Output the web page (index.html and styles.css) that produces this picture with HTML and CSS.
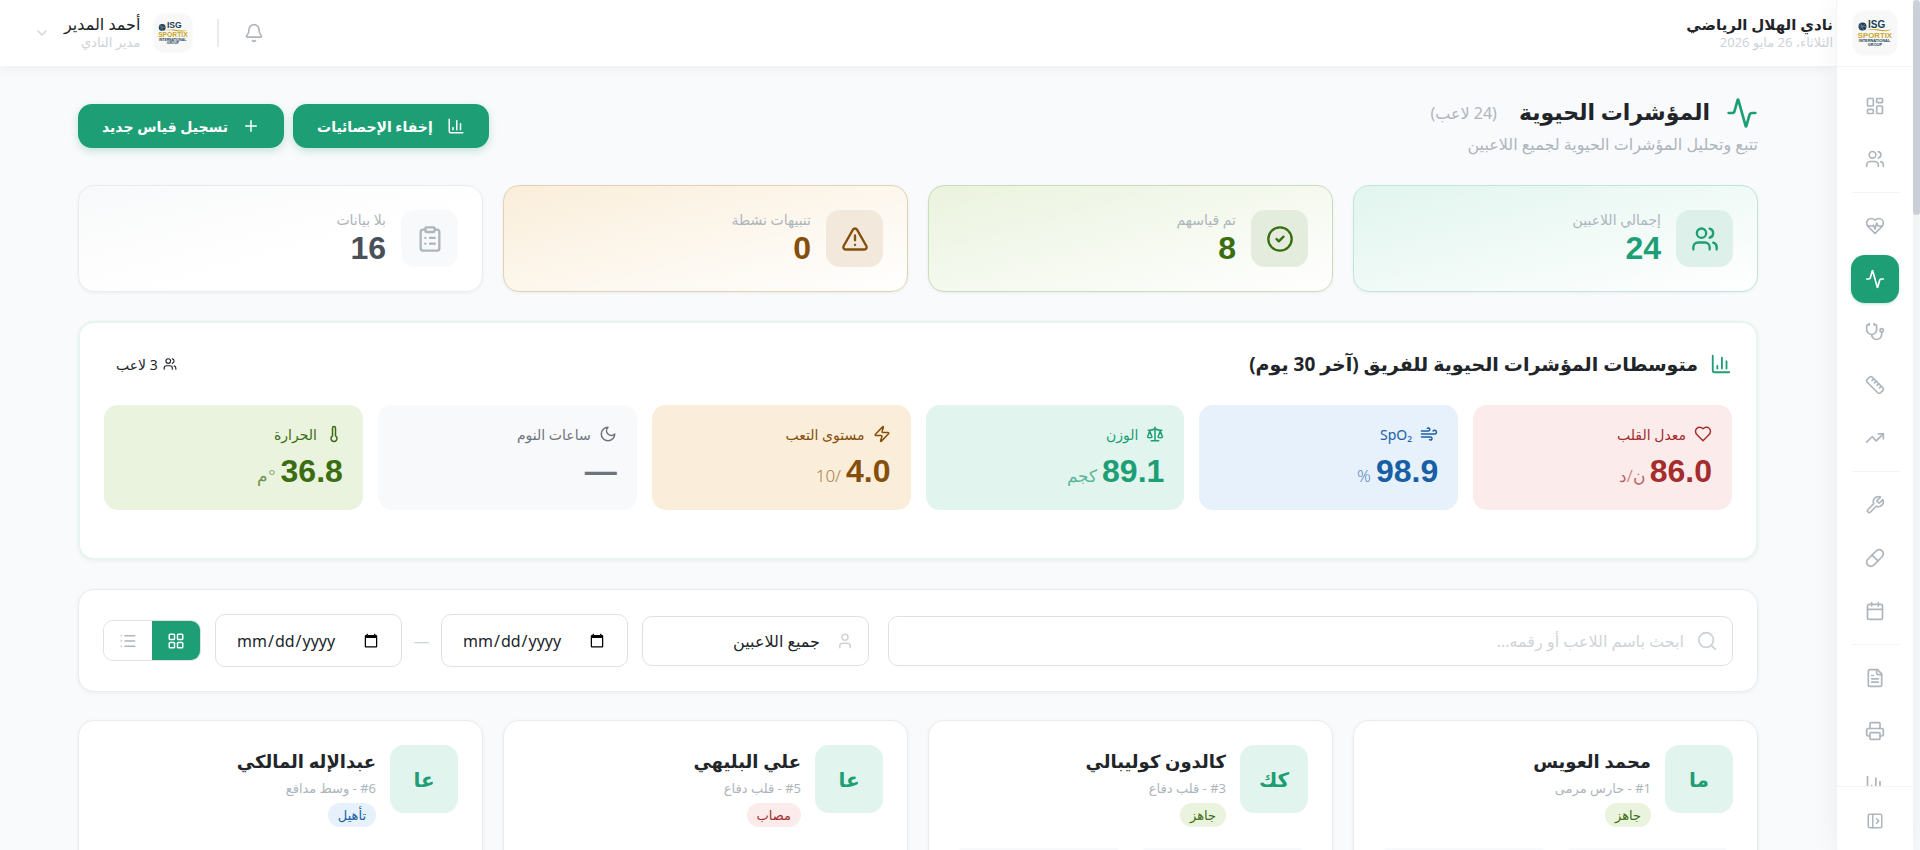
FILE: index.html
```html
<!DOCTYPE html>
<html lang="ar" dir="rtl">
<head>
    <meta charset="UTF-8">
    <title>المؤشرات الحيوية</title>
    <link rel="stylesheet" href="styles.css">
</head>
<body>
    <svg class="sprite" aria-hidden="true">
        <symbol id="i-dashboard" viewBox="0 0 24 24"><rect width="7" height="9" x="3" y="3" rx="1"/><rect width="7" height="5" x="14" y="3" rx="1"/><rect width="7" height="9" x="14" y="12" rx="1"/><rect width="7" height="5" x="3" y="16" rx="1"/></symbol>
        <symbol id="i-users" viewBox="0 0 24 24"><path d="M16 21v-2a4 4 0 0 0-4-4H6a4 4 0 0 0-4 4v2"/><circle cx="9" cy="7" r="4"/><path d="M22 21v-2a4 4 0 0 0-3-3.87M16 3.13a4 4 0 0 1 0 7.75"/></symbol>
        <symbol id="i-heart-pulse" viewBox="0 0 24 24"><path d="M19 14c1.49-1.46 3-3.21 3-5.5A5.5 5.5 0 0 0 16.5 3c-1.76 0-3 .5-4.5 2-1.5-1.5-2.74-2-4.5-2A5.5 5.5 0 0 0 2 8.5c0 2.3 1.5 4.05 3 5.5l7 7Z"/><path d="M3.22 12H9.5l.5-1 2 4.5 2-7 1.5 3.5h5.27"/></symbol>
        <symbol id="i-activity" viewBox="0 0 24 24"><path d="M22 12h-2.48a2 2 0 0 0-1.93 1.46l-2.35 8.36a.25.25 0 0 1-.48 0L9.24 2.18a.25.25 0 0 0-.48 0l-2.35 8.36A2 2 0 0 1 4.49 12H2"/></symbol>
        <symbol id="i-stethoscope" viewBox="0 0 24 24"><path d="M11 2v2M5 2v2M5 3H4a2 2 0 0 0-2 2v4a6 6 0 0 0 12 0V5a2 2 0 0 0-2-2h-1"/><path d="M8 15a6 6 0 0 0 12 0v-3"/><circle cx="20" cy="10" r="2"/></symbol>
        <symbol id="i-ruler" viewBox="0 0 24 24"><path d="M21.3 15.3a2.4 2.4 0 0 1 0 3.4l-2.6 2.6a2.4 2.4 0 0 1-3.4 0L2.7 8.7a2.41 2.41 0 0 1 0-3.4l2.6-2.6a2.41 2.41 0 0 1 3.4 0Z"/><path d="m14.5 12.5 2-2M11.5 9.5l2-2M8.5 6.5l2-2M17.5 15.5l2-2"/></symbol>
        <symbol id="i-trending" viewBox="0 0 24 24"><path d="M16 7h6v6"/><path d="m22 7-8.5 8.5-5-5L2 17"/></symbol>
        <symbol id="i-wrench" viewBox="0 0 24 24"><path d="M14.7 6.3a1 1 0 0 0 0 1.4l1.6 1.6a1 1 0 0 0 1.4 0l3.77-3.77a6 6 0 0 1-7.94 7.94l-6.91 6.91a2.12 2.12 0 0 1-3-3l6.91-6.91a6 6 0 0 1 7.94-7.94l-3.76 3.76z"/></symbol>
        <symbol id="i-pill" viewBox="0 0 24 24"><path d="m10.5 20.5 10-10a4.95 4.95 0 1 0-7-7l-10 10a4.95 4.95 0 1 0 7 7Z"/><path d="m8.5 8.5 7 7"/></symbol>
        <symbol id="i-calendar" viewBox="0 0 24 24"><path d="M8 2v4M16 2v4M3 10h18"/><rect width="18" height="18" x="3" y="4" rx="2"/></symbol>
        <symbol id="i-file" viewBox="0 0 24 24"><path d="M15 2H6a2 2 0 0 0-2 2v16a2 2 0 0 0 2 2h12a2 2 0 0 0 2-2V7Z"/><path d="M14 2v4a2 2 0 0 0 2 2h4M10 9H8M16 13H8M16 17H8"/></symbol>
        <symbol id="i-printer" viewBox="0 0 24 24"><path d="M6 18H4a2 2 0 0 1-2-2v-5a2 2 0 0 1 2-2h16a2 2 0 0 1 2 2v5a2 2 0 0 1-2 2h-2"/><path d="M6 9V3a1 1 0 0 1 1-1h10a1 1 0 0 1 1 1v6"/><rect x="6" y="14" width="12" height="8" rx="1"/></symbol>
        <symbol id="i-chart" viewBox="0 0 24 24"><path d="M3 3v16a2 2 0 0 0 2 2h16M18 17V9M13 17V5M8 17v-3"/></symbol>
        <symbol id="i-panel" viewBox="0 0 24 24"><rect width="18" height="18" x="3" y="3" rx="2"/><path d="M9 3v18M14 9l3 3-3 3"/></symbol>
        <symbol id="i-bell" viewBox="0 0 24 24"><path d="M10.268 21a2 2 0 0 0 3.464 0"/><path d="M3.262 15.326A1 1 0 0 0 4 17h16a1 1 0 0 0 .74-1.673C19.41 13.956 18 12.499 18 8A6 6 0 0 0 6 8c0 4.499-1.411 5.956-2.738 7.326"/></symbol>
        <symbol id="i-chevron" viewBox="0 0 24 24"><path d="m6 9 6 6 6-6"/></symbol>
        <symbol id="i-plus" viewBox="0 0 24 24"><path d="M5 12h14M12 5v14"/></symbol>
        <symbol id="i-check" viewBox="0 0 24 24"><circle cx="12" cy="12" r="10"/><path d="m9 12 2 2 4-4"/></symbol>
        <symbol id="i-alert" viewBox="0 0 24 24"><path d="m21.73 18-8-14a2 2 0 0 0-3.48 0l-8 14A2 2 0 0 0 4 21h16a2 2 0 0 0 1.73-3M12 9v4M12 17h.01"/></symbol>
        <symbol id="i-clipboard" viewBox="0 0 24 24"><rect width="8" height="4" x="8" y="2" rx="1"/><path d="M16 4h2a2 2 0 0 1 2 2v14a2 2 0 0 1-2 2H6a2 2 0 0 1-2-2V6a2 2 0 0 1 2-2h2M12 11h4M12 16h4M8 11h.01M8 16h.01"/></symbol>
        <symbol id="i-heart" viewBox="0 0 24 24"><path d="M19 14c1.49-1.46 3-3.21 3-5.5A5.5 5.5 0 0 0 16.5 3c-1.76 0-3 .5-4.5 2-1.5-1.5-2.74-2-4.5-2A5.5 5.5 0 0 0 2 8.5c0 2.3 1.5 4.05 3 5.5l7 7Z"/></symbol>
        <symbol id="i-wind" viewBox="0 0 24 24"><path d="M12.8 19.6A2 2 0 1 0 14 16H2M17.5 8a2.5 2.5 0 1 1 2 4H2M9.8 4.4A2 2 0 1 1 11 8H2"/></symbol>
        <symbol id="i-scale" viewBox="0 0 24 24"><path d="m16 16 3-8 3 8c-.87.65-1.92 1-3 1s-2.13-.35-3-1ZM2 16l3-8 3 8c-.87.65-1.92 1-3 1s-2.13-.35-3-1ZM7 21h10M12 3v18M3 7h2c2 0 5-1 7-2 2 1 5 2 7 2h2"/></symbol>
        <symbol id="i-zap" viewBox="0 0 24 24"><path d="M4 14a1 1 0 0 1-.78-1.63l9.9-10.2a.5.5 0 0 1 .86.46l-1.92 6.02A1 1 0 0 0 13 10h7a1 1 0 0 1 .78 1.63l-9.9 10.2a.5.5 0 0 1-.86-.46l1.92-6.02A1 1 0 0 0 11 14z"/></symbol>
        <symbol id="i-moon" viewBox="0 0 24 24"><path d="M12 3a6 6 0 0 0 9 9 9 9 0 1 1-9-9Z"/></symbol>
        <symbol id="i-thermometer" viewBox="0 0 24 24"><path d="M14 4v10.54a4 4 0 1 1-4 0V4a2 2 0 0 1 4 0Z"/></symbol>
        <symbol id="i-search" viewBox="0 0 24 24"><circle cx="11" cy="11" r="8"/><path d="m21 21-4.3-4.3"/></symbol>
        <symbol id="i-user" viewBox="0 0 24 24"><path d="M19 21v-2a4 4 0 0 0-4-4H9a4 4 0 0 0-4 4v2"/><circle cx="12" cy="7" r="4"/></symbol>
        <symbol id="i-grid" viewBox="0 0 24 24"><rect width="7" height="7" x="3" y="3" rx="1"/><rect width="7" height="7" x="14" y="3" rx="1"/><rect width="7" height="7" x="14" y="14" rx="1"/><rect width="7" height="7" x="3" y="14" rx="1"/></symbol>
        <symbol id="i-list" viewBox="0 0 24 24"><path d="M3 5h.01M3 12h.01M3 19h.01M8 5h13M8 12h13M8 19h13"/></symbol>
    </svg>

    <div class="scroll-track"><div class="scroll-thumb"></div></div>

    <aside class="sidebar">
        <div class="sidebar-logo">
            <svg class="logo" viewBox="0 0 440 440">
                <circle cx="95" cy="155" r="40" fill="#1c3f57"/>
                <path d="M58 145l75 15M75 122l30 68M122 130l-52 48" fill="none" stroke="#7c93a1" stroke-width="7"/>
                <path d="M50 197c80-8 140-24 200-14 50 10 90 12 135 2-40 24-95 20-150 8-60-10-115-4-185 4z" fill="#c9a62c"/>
                <text class="logo-dark" x="150" y="165" font-size="100">ISG</text>
                <text class="logo-gold" x="48" y="268" font-size="78">SPORTIX</text>
                <text class="logo-dark" x="58" y="308" font-size="39">INTERNATIONAL</text>
                <text class="logo-dark" x="148" y="345" font-size="39">GROUP</text>
            </svg>
        </div>
        <nav class="nav">
            <a href="#" class="nav-item" aria-label="لوحة التحكم"><svg class="icon"><use href="#i-dashboard"/></svg></a>
            <a href="#" class="nav-item" aria-label="اللاعبون"><svg class="icon"><use href="#i-users"/></svg></a>
            <hr class="nav-sep">
            <a href="#" class="nav-item" aria-label="الصحة"><svg class="icon"><use href="#i-heart-pulse"/></svg></a>
            <a href="#" class="nav-item active" aria-label="المؤشرات الحيوية"><svg class="icon"><use href="#i-activity"/></svg></a>
            <a href="#" class="nav-item" aria-label="الفحوصات"><svg class="icon"><use href="#i-stethoscope"/></svg></a>
            <a href="#" class="nav-item" aria-label="القياسات"><svg class="icon"><use href="#i-ruler"/></svg></a>
            <a href="#" class="nav-item" aria-label="الأداء"><svg class="icon"><use href="#i-trending"/></svg></a>
            <hr class="nav-sep">
            <a href="#" class="nav-item" aria-label="الأدوات"><svg class="icon"><use href="#i-wrench"/></svg></a>
            <a href="#" class="nav-item" aria-label="الأدوية"><svg class="icon"><use href="#i-pill"/></svg></a>
            <a href="#" class="nav-item" aria-label="المواعيد"><svg class="icon"><use href="#i-calendar"/></svg></a>
            <hr class="nav-sep">
            <a href="#" class="nav-item" aria-label="التقارير"><svg class="icon"><use href="#i-file"/></svg></a>
            <a href="#" class="nav-item" aria-label="الطباعة"><svg class="icon"><use href="#i-printer"/></svg></a>
            <a href="#" class="nav-item" aria-label="الإحصائيات"><svg class="icon"><use href="#i-chart"/></svg></a>
        </nav>
        <div class="sidebar-footer">
            <button class="plain-btn" aria-label="توسيع القائمة"><svg class="icon icon-18"><use href="#i-panel"/></svg></button>
        </div>
    </aside>

    <div class="page">
        <header class="topbar">
            <div class="club">
                <strong class="club-name">نادي الهلال الرياضي</strong>
                <span class="club-date">الثلاثاء، 26 مايو 2026</span>
            </div>
            <div class="topbar-end">
                <button class="plain-btn" aria-label="الإشعارات"><svg class="icon"><use href="#i-bell"/></svg></button>
                <span class="divider"></span>
                <button class="user-btn">
                    <svg class="logo logo-sm" viewBox="0 0 440 440">
                        <circle cx="95" cy="155" r="40" fill="#1c3f57"/>
                        <path d="M58 145l75 15M75 122l30 68M122 130l-52 48" fill="none" stroke="#7c93a1" stroke-width="7"/>
                        <path d="M50 197c80-8 140-24 200-14 50 10 90 12 135 2-40 24-95 20-150 8-60-10-115-4-185 4z" fill="#c9a62c"/>
                        <text class="logo-dark" x="150" y="165" font-size="100">ISG</text>
                        <text class="logo-gold" x="48" y="268" font-size="78">SPORTIX</text>
                        <text class="logo-dark" x="58" y="308" font-size="39">INTERNATIONAL</text>
                        <text class="logo-dark" x="148" y="345" font-size="39">GROUP</text>
                    </svg>
                    <span class="user-text">
                        <span class="user-name">أحمد المدير</span>
                        <span class="user-role">مدير النادي</span>
                    </span>
                    <svg class="icon icon-16 muted"><use href="#i-chevron"/></svg>
                </button>
            </div>
        </header>

        <main class="content">
            <div class="page-head">
                <div>
                    <div class="title-row">
                        <svg class="icon icon-32 green"><use href="#i-activity"/></svg>
                        <h1>المؤشرات الحيوية</h1>
                        <span class="count">(24 لاعب)</span>
                    </div>
                    <p class="subtitle">تتبع وتحليل المؤشرات الحيوية لجميع اللاعبين</p>
                </div>
                <div class="actions">
                    <button class="btn"><svg class="icon icon-18"><use href="#i-chart"/></svg>إخفاء الإحصائيات</button>
                    <button class="btn"><svg class="icon icon-18"><use href="#i-plus"/></svg>تسجيل قياس جديد</button>
                </div>
            </div>

            <section class="stats">
                <div class="stat stat-teal">
                    <div class="stat-icon"><svg class="icon icon-28"><use href="#i-users"/></svg></div>
                    <div class="stat-text"><div class="stat-label">إجمالي اللاعبين</div><div class="stat-value">24</div></div>
                </div>
                <div class="stat stat-green">
                    <div class="stat-icon"><svg class="icon icon-28"><use href="#i-check"/></svg></div>
                    <div class="stat-text"><div class="stat-label">تم قياسهم</div><div class="stat-value">8</div></div>
                </div>
                <div class="stat stat-amber">
                    <div class="stat-icon"><svg class="icon icon-28"><use href="#i-alert"/></svg></div>
                    <div class="stat-text"><div class="stat-label">تنبيهات نشطة</div><div class="stat-value">0</div></div>
                </div>
                <div class="stat stat-gray">
                    <div class="stat-icon"><svg class="icon icon-28"><use href="#i-clipboard"/></svg></div>
                    <div class="stat-text"><div class="stat-label">بلا بيانات</div><div class="stat-value">16</div></div>
                </div>
            </section>

            <section class="averages">
                <div class="averages-head">
                    <h2><svg class="icon icon-22 green"><use href="#i-chart"/></svg>متوسطات المؤشرات الحيوية للفريق (آخر 30 يوم)</h2>
                    <span class="players-count"><svg class="icon icon-14"><use href="#i-users"/></svg>3 لاعب</span>
                </div>
                <div class="tiles">
                    <div class="tile red">
                        <div class="tile-label"><svg class="icon icon-18"><use href="#i-heart"/></svg>معدل القلب</div>
                        <div class="tile-value">86.0 <span class="unit">ن/د</span></div>
                    </div>
                    <div class="tile blue">
                        <div class="tile-label"><svg class="icon icon-18"><use href="#i-wind"/></svg>SpO₂</div>
                        <div class="tile-value">98.9 <span class="unit">%</span></div>
                    </div>
                    <div class="tile teal">
                        <div class="tile-label"><svg class="icon icon-18"><use href="#i-scale"/></svg>الوزن</div>
                        <div class="tile-value">89.1 <span class="unit">كجم</span></div>
                    </div>
                    <div class="tile amber">
                        <div class="tile-label"><svg class="icon icon-18"><use href="#i-zap"/></svg>مستوى التعب</div>
                        <div class="tile-value">4.0 <span class="unit">/10</span></div>
                    </div>
                    <div class="tile gray">
                        <div class="tile-label"><svg class="icon icon-18"><use href="#i-moon"/></svg>ساعات النوم</div>
                        <div class="tile-value">—</div>
                    </div>
                    <div class="tile lime">
                        <div class="tile-label"><svg class="icon icon-18"><use href="#i-thermometer"/></svg>الحرارة</div>
                        <div class="tile-value">36.8 <span class="unit">°م</span></div>
                    </div>
                </div>
            </section>

            <section class="filters">
                <label class="field search">
                    <svg class="icon icon-22"><use href="#i-search"/></svg>
                    <input type="text" placeholder="ابحث باسم اللاعب أو رقمه..." aria-label="بحث">
                </label>
                <label class="field player">
                    <svg class="icon icon-18"><use href="#i-user"/></svg>
                    <select aria-label="اللاعب"><option>جميع اللاعبين</option></select>
                </label>
                <div class="dates">
                    <input type="date" class="date" dir="ltr" lang="en" aria-label="من تاريخ">
                    <span class="dash">—</span>
                    <input type="date" class="date" dir="ltr" lang="en" aria-label="إلى تاريخ">
                </div>
                <div class="view-toggle">
                    <button class="on" aria-label="شبكة"><svg class="icon icon-18"><use href="#i-grid"/></svg></button>
                    <button aria-label="قائمة"><svg class="icon icon-18"><use href="#i-list"/></svg></button>
                </div>
            </section>

            <section class="players">
                <article class="player-card">
                    <div class="player-top">
                        <div class="avatar">ما</div>
                        <div>
                            <h3>محمد العويس</h3>
                            <p>#1 - حارس مرمى</p>
                            <span class="badge ready">جاهز</span>
                        </div>
                    </div>
                    <div class="player-vitals"><div></div><div></div></div>
                </article>
                <article class="player-card">
                    <div class="player-top">
                        <div class="avatar">كك</div>
                        <div>
                            <h3>كالدون كوليبالي</h3>
                            <p>#3 - قلب دفاع</p>
                            <span class="badge ready">جاهز</span>
                        </div>
                    </div>
                    <div class="player-vitals"><div></div><div></div></div>
                </article>
                <article class="player-card">
                    <div class="player-top">
                        <div class="avatar">عا</div>
                        <div>
                            <h3>علي البليهي</h3>
                            <p>#5 - قلب دفاع</p>
                            <span class="badge injured">مصاب</span>
                        </div>
                    </div>
                </article>
                <article class="player-card">
                    <div class="player-top">
                        <div class="avatar">عا</div>
                        <div>
                            <h3>عبدالإله المالكي</h3>
                            <p>#6 - وسط مدافع</p>
                            <span class="badge rehab">تأهيل</span>
                        </div>
                    </div>
                </article>
            </section>
        </main>
    </div>
</body>
</html>
```

FILE: styles.css
```css
* {
    box-sizing: border-box;
}
body {
    margin: 0;
    height: 100vh;
    overflow: hidden;
    display: flex;
    background: #f9fafc;
    color: #212529;
    font-family: "Noto Sans", "DejaVu Sans", sans-serif;
    font-size: 14px;
}
h1, h2, h3, p {
    margin: 0;
}
button, input, select {
    font-family: inherit;
    font-size: 14px;
    color: inherit;
}
button {
    cursor: pointer;
}
.sprite {
    position: absolute;
    width: 0;
    height: 0;
}
.icon {
    width: 20px;
    height: 20px;
    flex-shrink: 0;
    fill: none;
    stroke: currentColor;
    stroke-width: 2;
    stroke-linecap: round;
    stroke-linejoin: round;
}
.icon-14 { width: 14px; height: 14px; }
.icon-16 { width: 16px; height: 16px; }
.icon-18 { width: 18px; height: 18px; }
.icon-22 { width: 22px; height: 22px; }
.icon-28 { width: 28px; height: 28px; }
.icon-32 { width: 32px; height: 32px; }
.green { color: #1d9e75; }
.muted { color: #ced4da; }

/* scrollbar */
.scroll-track {
    width: 7px;
    flex-shrink: 0;
    background: #f8f9fa;
}
.scroll-thumb {
    height: 215px;
    border-radius: 4px;
    background: #ced4da;
}

/* sidebar */
.sidebar {
    width: 77px;
    flex-shrink: 0;
    display: flex;
    flex-direction: column;
    background: #fff;
    border-left: 1px solid #f1f3f5;
    box-shadow: 0 0 24px rgba(0, 0, 0, 0.06);
    z-index: 2;
}
.sidebar-logo {
    height: 67px;
    flex-shrink: 0;
    display: flex;
    align-items: center;
    justify-content: center;
    border-bottom: 1px solid #f1f3f5;
}
.logo {
    width: 44px;
    height: 44px;
    flex-shrink: 0;
    border-radius: 12px;
    background: #f8f8f8;
    box-shadow: 0 0 3px rgba(0, 0, 0, 0.05);
    direction: ltr;
}
.logo-sm {
    width: 38px;
    height: 38px;
    border-radius: 10px;
}
.logo-dark, .logo-gold {
    font-family: "Liberation Sans", sans-serif;
    font-weight: bold;
    fill: #1c3f57;
}
.logo-gold {
    fill: #c9a62c;
}
.nav {
    flex: 1;
    min-height: 0;
    overflow: hidden;
    padding-top: 15px;
    display: flex;
    flex-direction: column;
    align-items: center;
    gap: 5px;
}
.nav-item {
    width: 48px;
    height: 48px;
    flex-shrink: 0;
    display: flex;
    align-items: center;
    justify-content: center;
    border-radius: 14px;
    color: #adb5bd;
}
.nav-item.active {
    background: #1d9e75;
    color: #fff;
    box-shadow: 0 1px 3px rgba(29, 158, 117, 0.3);
}
.nav-sep {
    width: 47px;
    height: 1px;
    flex-shrink: 0;
    margin: 4px 0;
    border: 0;
    background: #f1f3f5;
}
.sidebar-footer {
    height: 64px;
    display: flex;
    align-items: center;
    justify-content: center;
    padding-top: 4px;
    border-top: 1px solid #f1f3f5;
}
.plain-btn {
    display: flex;
    padding: 0;
    border: 0;
    background: none;
    color: #adb5bd;
}

/* top bar */
.page {
    flex: 1;
    min-width: 0;
}
.topbar {
    height: 66px;
    display: flex;
    align-items: center;
    justify-content: space-between;
    padding: 0 3px 0 34px;
    background: #fff;
    box-shadow: 0 2px 12px rgba(0, 0, 0, 0.06);
}
.club, .user-text {
    display: flex;
    flex-direction: column;
    line-height: 18px;
}
.club-name {
    font-size: 15px;
}
.club-date, .user-role {
    font-size: 13px;
    color: #ced4da;
}
.topbar-end {
    display: flex;
    align-items: center;
    gap: 25px;
}
.divider {
    width: 2px;
    height: 28px;
    background: #e9ecef;
}
.user-btn {
    display: flex;
    align-items: center;
    gap: 14px;
    padding: 0;
    border: 0;
    background: none;
    text-align: right;
}
.user-name {
    font-size: 16px;
}

/* page heading */
.content {
    max-width: 1728px;
    margin: 0 auto;
    padding: 28px 24px 0;
}
.page-head {
    display: flex;
    justify-content: space-between;
    align-items: center;
    margin-bottom: 27px;
}
.title-row {
    display: flex;
    align-items: center;
    gap: 16px;
    height: 38px;
}
h1 {
    padding-bottom: 4px;
    font-size: 22px;
    line-height: 34px;
}
.count {
    padding: 0 6px;
    font-size: 16px;
    color: #adb5bd;
}
.subtitle {
    font-size: 16px;
    line-height: 24px;
    padding-bottom: 2px;
    color: #adb5bd;
}
.actions {
    display: flex;
    gap: 9px;
}
.btn {
    height: 44px;
    display: flex;
    align-items: center;
    gap: 14px;
    padding: 0 24px;
    border: 0;
    border-radius: 14px;
    background: #1d9e75;
    color: #fff;
    font-weight: bold;
    box-shadow: 0 3px 8px rgba(29, 158, 117, 0.25);
}

/* stat cards */
.stats, .players {
    display: grid;
    grid-template-columns: repeat(4, 1fr);
    gap: 20px;
}
.stat {
    display: flex;
    align-items: center;
    gap: 15px;
    height: 107px;
    padding: 0 24px;
    border: 1px solid #e9ecef;
    border-radius: 16px;
    box-shadow: 0 1px 3px rgba(0, 0, 0, 0.06);
}
.stat-icon {
    width: 57px;
    height: 57px;
    display: flex;
    align-items: center;
    justify-content: center;
    border-radius: 14px;
}
.stat-text {
    padding-bottom: 4px;
}
.stat-label {
    font-size: 14px;
    line-height: 22px;
    color: #adb5bd;
}
.stat-value {
    font-family: "Liberation Sans", sans-serif;
    font-size: 32px;
    line-height: 34px;
    font-weight: bold;
}
.stat-teal {
    border-color: #c0e5d9;
    background: linear-gradient(165deg, #e1f5ee, #fff);
}
.stat-teal .stat-icon { background: #ddf1ea; }
.stat-teal .stat-icon, .stat-teal .stat-value { color: #1d9e75; }
.stat-green {
    border-color: #cbdcbb;
    background: linear-gradient(165deg, #eaf3de, #fff);
}
.stat-green .stat-icon { background: #e4ecdd; }
.stat-green .stat-icon, .stat-green .stat-value { color: #3b6d11; }
.stat-amber {
    border-color: #e4d0b3;
    background: linear-gradient(165deg, #faeeda, #fff);
}
.stat-amber .stat-icon { background: #f2e8dc; }
.stat-amber .stat-icon, .stat-amber .stat-value { color: #854f0b; }
.stat-gray {
    background: linear-gradient(165deg, #f8f9fa, #fff 60%);
}
.stat-gray .stat-icon { background: #f8f9fb; color: #adb5bd; }
.stat-gray .stat-value { color: #495057; }

/* team averages */
.averages {
    margin-top: 29px;
    padding: 22px 24px 48px;
    border: 2px solid #e6f5f0;
    border-radius: 16px;
    background: #fff;
    box-shadow: 0 1px 4px rgba(0, 0, 0, 0.06);
}
.averages-head {
    height: 38px;
    display: flex;
    align-items: center;
    justify-content: space-between;
    margin-bottom: 22px;
}
h2 {
    display: flex;
    align-items: center;
    gap: 12px;
    font-size: 19px;
}
.players-count {
    display: flex;
    align-items: center;
    gap: 5px;
    padding: 0 12px;
    font-size: 14px;
}
.tiles {
    display: grid;
    grid-template-columns: repeat(6, 1fr);
    gap: 15px;
}
.tile {
    height: 105px;
    padding: 16px 20px;
    border-radius: 14px;
}
.tile-label {
    display: flex;
    align-items: center;
    gap: 8px;
    height: 26px;
    font-size: 14px;
}
.tile-value {
    display: flex;
    align-items: baseline;
    gap: 5px;
    margin-top: 6px;
    font-family: "Liberation Sans", sans-serif;
    font-size: 32px;
    line-height: 36px;
    font-weight: bold;
}
.unit {
    font-family: "Noto Sans", "DejaVu Sans", sans-serif;
    font-size: 17px;
    font-weight: 300;
    opacity: 0.7;
}
.red { background: #fcebeb; color: #a32d2d; }
.blue { background: #e6f1fb; color: #185fa5; }
.teal { background: #e1f5ee; color: #1d9e75; }
.amber { background: #faeeda; color: #854f0b; }
.gray { background: #f8f9fb; color: #6c757d; }
.lime { background: #eaf3de; color: #3b6d11; }

/* filters */
.filters {
    display: flex;
    align-items: center;
    gap: 14px;
    margin-top: 29px;
    padding: 24px;
    border: 1px solid #e9ecef;
    border-radius: 16px;
    background: #fff;
    box-shadow: 0 1px 4px rgba(0, 0, 0, 0.06);
}
.field {
    height: 50px;
    display: flex;
    align-items: center;
    gap: 12px;
    padding: 0 14px;
    border: 1px solid #dee2e6;
    border-radius: 10px;
    color: #ced4da;
}
.field input, .field select {
    flex: 1;
    min-width: 0;
    height: 100%;
    padding: 0;
    border: 0;
    outline: 0;
    background: none;
    appearance: none;
    font-size: 16px;
}
.field input::placeholder {
    color: #ced4da;
}
.search {
    flex: 1;
    margin-left: 5px;
}
.player {
    width: 227px;
    gap: 16px;
}
.player select {
    color: #212529;
}
.dates {
    display: flex;
    align-items: center;
    gap: 10px;
}
.date {
    width: 187px;
    height: 53px;
    padding: 0 20px;
    border: 1px solid #dee2e6;
    border-radius: 10px;
    background: #fff;
    font-size: 16px;
}
.dash {
    width: 19px;
    text-align: center;
    font-size: 16px;
    color: #ced4da;
}
.view-toggle {
    height: 41px;
    display: flex;
    overflow: hidden;
    border: 1px solid #dee2e6;
    border-radius: 10px;
}
.view-toggle button {
    width: 48px;
    display: flex;
    align-items: center;
    justify-content: center;
    padding: 0;
    border: 0;
    background: #fff;
    color: #adb5bd;
}
.view-toggle .on {
    background: #1d9e75;
    color: #fff;
}

/* players */
.players {
    margin-top: 28px;
}
.player-card {
    height: 300px;
    padding: 24px;
    border: 1px solid #e9ecef;
    border-radius: 16px;
    background: #fff;
    box-shadow: 0 1px 4px rgba(0, 0, 0, 0.05);
}
.player-top {
    display: flex;
    gap: 14px;
}
.avatar {
    width: 68px;
    height: 68px;
    display: flex;
    align-items: center;
    justify-content: center;
    border-radius: 14px;
    background: #e1f5ee;
    color: #1d9e75;
    font-size: 20px;
    font-weight: bold;
}
h3 {
    font-size: 18px;
    line-height: 32px;
}
.player-top p {
    font-size: 13px;
    line-height: 22px;
    color: #adb5bd;
}
.badge {
    display: block;
    width: fit-content;
    margin-top: 4px;
    padding: 0 10px;
    border-radius: 12px;
    font-size: 13px;
    line-height: 24px;
}
.ready { background: #eaf3de; color: #3b6d11; }
.injured { background: #fcebeb; color: #a32d2d; }
.rehab { background: #e6f1fb; color: #185fa5; }
.player-vitals {
    display: grid;
    grid-template-columns: 1fr 1fr;
    gap: 12px;
    margin-top: 21px;
}
.player-vitals div {
    height: 72px;
    border-radius: 12px;
    background: #f8f9fa;
}
```
